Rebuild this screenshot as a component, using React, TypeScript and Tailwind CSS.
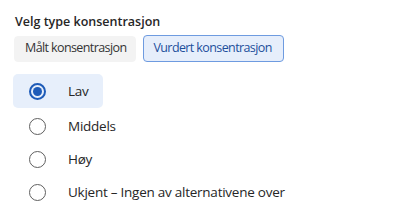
import React, { useState } from "react";

const options = [
  "Lav",
  "Middels",
  "Høy",
  "Ukjent – Ingen av alternativene over",
];

const App: React.FC = () => {
  const [type, setType] = useState<"malt" | "vurdert">("vurdert");
  const [value, setValue] = useState("Lav");

  return (
    <div className="w-[398px] h-[212px] bg-white font-['Open_Sans',sans-serif] text-[#262626] pl-[14px] pt-[13px]">
      {/* Type */}
      <h2 className="pl-px text-[12.5px] font-semibold leading-[18px]">
        Velg type konsentrasjon
      </h2>
      <div className="mt-[4px] flex items-center gap-[7px]">
        <button
          onClick={() => setType("malt")}
          className={`h-[26px] pl-[10px] pr-[9px] rounded-[4px] text-[12.5px] tracking-[-0.6px] border ${
            type === "malt"
              ? "bg-[#e6eefb] border-[#6e9be0] text-[#1d4f9c]"
              : "bg-[#f3f3f3] border-[#f3f3f3] text-[#333]"
          }`}
        >
          Målt konsentrasjon
        </button>
        <button
          onClick={() => setType("vurdert")}
          className={`h-[27px] pl-[9px] pr-[11px] rounded-[4px] text-[12.5px] tracking-[-0.6px] border ${
            type === "vurdert"
              ? "bg-[#e6eefb] border-[#6e9be0] text-[#1d4f9c]"
              : "bg-[#f3f3f3] border-[#f3f3f3] text-[#333]"
          }`}
        >
          Vurdert konsentrasjon
        </button>
      </div>

      {/* Options */}
      <div className="mt-[12px] flex flex-col">
        {options.map((opt, i) => {
          const checked = value === opt;
          return (
            <label
              key={opt}
              onClick={() => setValue(opt)}
              className={`-ml-px flex items-center self-start cursor-pointer rounded-[5px] pl-[16px] ${
                i === 0 ? "h-[34px] mb-[2px]" : "h-[33px]"
              } ${checked ? "bg-[#e7effb] w-[90px]" : ""}`}
            >
              <span
                className={`w-[17px] h-[17px] rounded-full flex items-center justify-center ${
                  checked
                    ? "border-2 border-[#1e5bb8]"
                    : "border-[1.5px] border-[#5f5f5f]"
                }`}
              >
                {checked && (
                  <span className="w-[9px] h-[9px] rounded-full bg-[#1e5bb8]" />
                )}
              </span>
              <span className="ml-[22px] text-[13.5px] tracking-[-0.25px] text-[#262626]">
                {opt}
              </span>
            </label>
          );
        })}
      </div>
    </div>
  );
};

export default App;
